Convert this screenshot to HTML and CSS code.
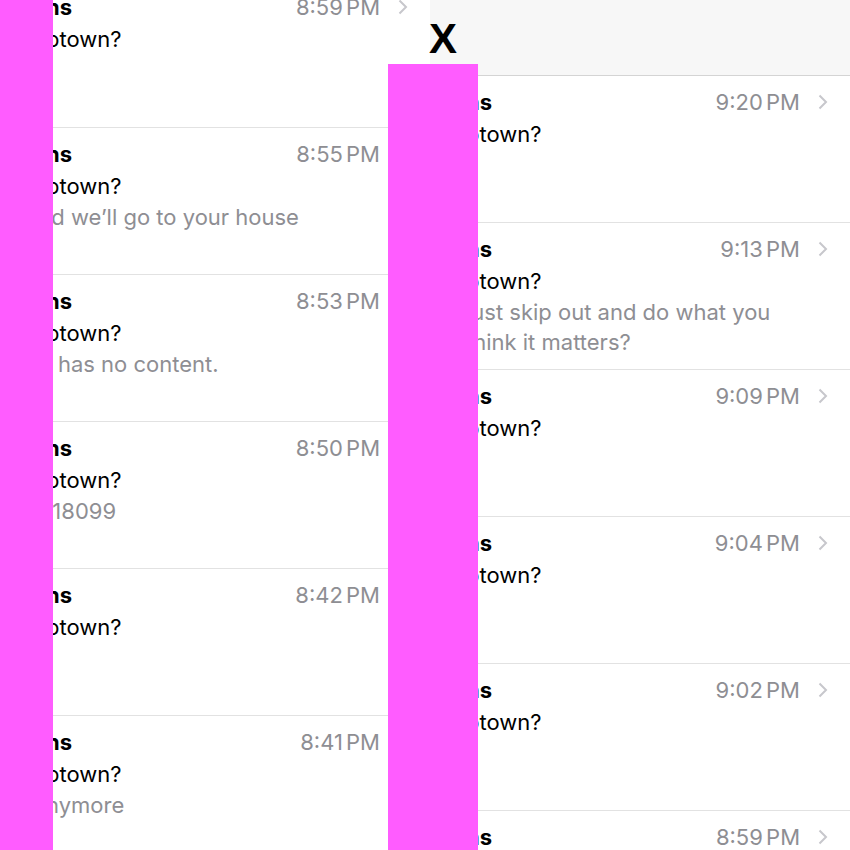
FILE: index.html
```html
<!DOCTYPE html>
<html lang="en">
<head>
  <meta charset="UTF-8">
  <meta name="viewport" content="width=device-width, initial-scale=1.0">
  <title>Mail list comparison</title>
  <link rel="stylesheet" href="styles.css">
</head>
<body>
  <div class="compare">
    <!-- before: list scrolled a bit -->
    <section class="screen screen-left">
      <div class="mail-list">
        <div class="mail">
          <div class="mail-head">
            <span class="sender">ns</span>
            <span class="time">8:59 PM</span>
            <svg class="chevron" viewBox="0 0 10 16"><path d="M1.5 1.5 L8 8 L1.5 14.5"/></svg>
          </div>
          <div class="subject">ptown?</div>
        </div>
        <div class="mail">
          <div class="mail-head">
            <span class="sender">ns</span>
            <span class="time">8:55 PM</span>
            <svg class="chevron" viewBox="0 0 10 16"><path d="M1.5 1.5 L8 8 L1.5 14.5"/></svg>
          </div>
          <div class="subject">ptown?</div>
          <div class="preview">ld we’ll go to your house</div>
        </div>
        <div class="mail">
          <div class="mail-head">
            <span class="sender">ns</span>
            <span class="time">8:53 PM</span>
            <svg class="chevron" viewBox="0 0 10 16"><path d="M1.5 1.5 L8 8 L1.5 14.5"/></svg>
          </div>
          <div class="subject">ptown?</div>
          <div class="preview">’ has no content.</div>
        </div>
        <div class="mail">
          <div class="mail-head">
            <span class="sender">ns</span>
            <span class="time">8:50 PM</span>
            <svg class="chevron" viewBox="0 0 10 16"><path d="M1.5 1.5 L8 8 L1.5 14.5"/></svg>
          </div>
          <div class="subject">ptown?</div>
          <div class="preview">:18099</div>
        </div>
        <div class="mail">
          <div class="mail-head">
            <span class="sender">ns</span>
            <span class="time">8:42 PM</span>
            <svg class="chevron" viewBox="0 0 10 16"><path d="M1.5 1.5 L8 8 L1.5 14.5"/></svg>
          </div>
          <div class="subject">ptown?</div>
        </div>
        <div class="mail">
          <div class="mail-head">
            <span class="sender">ns</span>
            <span class="time">8:41 PM</span>
            <svg class="chevron" viewBox="0 0 10 16"><path d="M1.5 1.5 L8 8 L1.5 14.5"/></svg>
          </div>
          <div class="subject">ptown?</div>
          <div class="preview">nymore</div>
        </div>
      </div>
    </section>

    <!-- after: top of the list -->
    <section class="screen screen-right">
      <div class="nav"></div>
      <div class="mail-list">
        <div class="mail">
          <div class="mail-head">
            <span class="sender">ns</span>
            <span class="time">9:20 PM</span>
            <svg class="chevron" viewBox="0 0 10 16"><path d="M1.5 1.5 L8 8 L1.5 14.5"/></svg>
          </div>
          <div class="subject">ptown?</div>
        </div>
        <div class="mail">
          <div class="mail-head">
            <span class="sender">ns</span>
            <span class="time">9:13 PM</span>
            <svg class="chevron" viewBox="0 0 10 16"><path d="M1.5 1.5 L8 8 L1.5 14.5"/></svg>
          </div>
          <div class="subject">ptown?</div>
          <div class="preview">just skip out and do what you<br>think it matters?</div>
        </div>
        <div class="mail">
          <div class="mail-head">
            <span class="sender">ns</span>
            <span class="time">9:09 PM</span>
            <svg class="chevron" viewBox="0 0 10 16"><path d="M1.5 1.5 L8 8 L1.5 14.5"/></svg>
          </div>
          <div class="subject">ptown?</div>
        </div>
        <div class="mail">
          <div class="mail-head">
            <span class="sender">ns</span>
            <span class="time">9:04 PM</span>
            <svg class="chevron" viewBox="0 0 10 16"><path d="M1.5 1.5 L8 8 L1.5 14.5"/></svg>
          </div>
          <div class="subject">ptown?</div>
        </div>
        <div class="mail">
          <div class="mail-head">
            <span class="sender">ns</span>
            <span class="time">9:02 PM</span>
            <svg class="chevron" viewBox="0 0 10 16"><path d="M1.5 1.5 L8 8 L1.5 14.5"/></svg>
          </div>
          <div class="subject">ptown?</div>
        </div>
        <div class="mail">
          <div class="mail-head">
            <span class="sender">ns</span>
            <span class="time">8:59 PM</span>
            <svg class="chevron" viewBox="0 0 10 16"><path d="M1.5 1.5 L8 8 L1.5 14.5"/></svg>
          </div>
          <div class="subject">ptown?</div>
        </div>
      </div>
    </section>

    <span class="versus">X</span>
    <div class="redact redact-left"></div>
    <div class="redact redact-right"></div>
  </div>
</body>
</html>
```

FILE: styles.css
```css
body {
  margin: 0;
  font-family: Inter, "Noto Sans", sans-serif;
  background: #fff;
  color: #000;
}
.compare {
  position: relative;
  display: flex;
  height: 850px;
  padding-left: 10px;
  overflow: hidden;
}
.screen {
  flex: none;
  width: 420px;
  overflow: hidden;
  background: #fff;
}
.screen-left .mail-list {
  margin-top: -19px;
}
.nav {
  height: 75px;
  background: #f7f7f7;
  border-bottom: 1px solid #d4d4d4;
}
.mail {
  box-sizing: border-box;
  height: 147px;
  padding: 11px 22px 0 36px;
  border-bottom: 1px solid #e2e2e2;
  overflow: hidden;
}
.mail-head {
  display: flex;
  align-items: baseline;
  height: 30px;
  line-height: 30px;
  font-size: 22px;
}
.sender {
  flex: 1;
  font-weight: 700;
  white-space: nowrap;
}
.time {
  color: #8e8e93;
  white-space: nowrap;
  word-spacing: -3px;
}
.chevron {
  width: 10px;
  height: 16px;
  margin-left: 18px;
  align-self: center;
  fill: none;
  stroke: #c7c7cc;
  stroke-width: 2;
}
.subject {
  margin-top: 2px;
  font-size: 22px;
  line-height: 30px;
}
.preview {
  margin-top: 1px;
  font-size: 22px;
  line-height: 30px;
  color: #8e8e93;
  white-space: nowrap;
}
.versus {
  position: absolute;
  left: 429px;
  top: 18px;
  font-family: "Liberation Sans", Arial, sans-serif;
  font-weight: 700;
  font-size: 42px;
  line-height: 41px;
}
.redact {
  position: absolute;
  background: #ff5cff;
}
.redact-left {
  left: 0;
  top: 0;
  bottom: 0;
  width: 53px;
}
.redact-right {
  left: 388px;
  top: 64px;
  bottom: 0;
  width: 90px;
}
```
